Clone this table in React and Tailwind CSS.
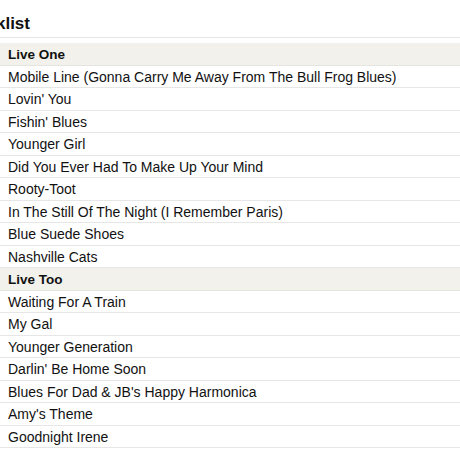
export default function App() {
  const groups = [
    {
      name: "Live One",
      tracks: [
        "Mobile Line (Gonna Carry Me Away From The Bull Frog Blues)",
        "Lovin' You",
        "Fishin' Blues",
        "Younger Girl",
        "Did You Ever Had To Make Up Your Mind",
        "Rooty-Toot",
        "In The Still Of The Night (I Remember Paris)",
        "Blue Suede Shoes",
        "Nashville Cats",
      ],
    },
    {
      name: "Live Too",
      tracks: [
        "Waiting For A Train",
        "My Gal",
        "Younger Generation",
        "Darlin' Be Home Soon",
        "Blues For Dad & JB's Happy Harmonica",
        "Amy's Theme",
        "Goodnight Irene",
      ],
    },
  ];
  return (
    <div
      className="w-[460px] h-[460px] overflow-hidden bg-white text-[#111]"
      style={{ fontFamily: '"Liberation Sans", Arial, sans-serif' }}
    >
      <div className="h-[38px] border-b border-[#e6e6e6] flex items-end pb-[5px]">
        <h2 className="ml-[-39px] text-[17px] font-bold leading-none whitespace-nowrap">Tracklist</h2>
      </div>
      <div className="mt-[5px] w-[480px]">
        {groups.map((g) => (
          <div key={g.name}>
            <div className="bg-[#f2f1ec] border-b border-[#e4e4e0] px-2 pt-[2px] text-[13.5px] leading-[19.5px] font-bold">
              {g.name}
            </div>
            {g.tracks.map((t) => (
              <div
                key={t}
                className="border-b border-[#e6e6e6] px-2 pt-[2px] pb-0 text-[14px] leading-[19.5px] whitespace-nowrap"
              >
                {t}
              </div>
            ))}
          </div>
        ))}
      </div>
    </div>
  );
}
